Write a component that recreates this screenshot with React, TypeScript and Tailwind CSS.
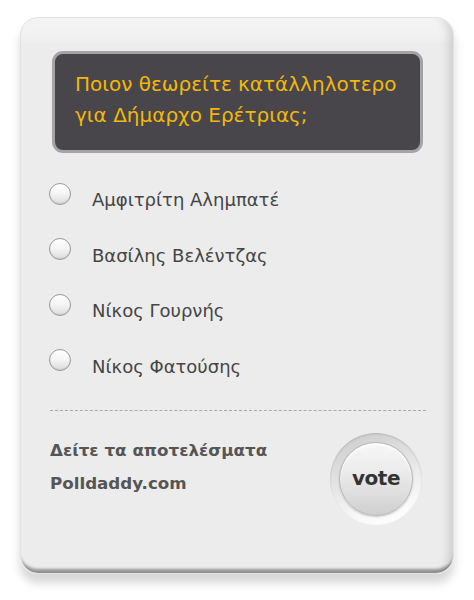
import React from "react";

const options = [
  "Αμφιτρίτη Αλημπατέ",
  "Βασίλης Βελέντζας",
  "Νίκος Γουρνής",
  "Νίκος Φατούσης",
];

export default function App() {
  return (
    <div className="w-[474px] h-[600px] bg-white pt-[17px] pl-[20px]" style={{ fontFamily: '"DejaVu Sans", Verdana, sans-serif' }}>
      <div className="w-[434px] h-[557px] rounded-[18px] border border-[#e2e2e2] bg-[linear-gradient(#f4f4f4_0px,#f1f1f1_18px,#ececec_26px,#ececec_100%)] shadow-[0_9px_10px_rgba(0,0,0,0.16),inset_0_-7px_3px_-3px_rgba(0,0,0,0.38),inset_-14px_0_10px_-10px_rgba(0,0,0,0.14)] pt-[33px] pl-[31px] pr-[30px]">
        <div className="w-[371px] h-[102px] rounded-[11px] border-[3px] border-[#a4a4a6] bg-[#48454b] flex flex-col justify-center pl-[20px]">
          <div className="text-[#f0b90a] text-[20px] leading-[31px] -mt-[4px]">
            <div>Ποιον θεωρείτε κατάλληλοτερο</div>
            <div>για Δήμαρχο Ερέτριας;</div>
          </div>
        </div>
        <div className="mt-[17px] flex flex-col">
          {options.map((o) => (
            <div key={o} className="h-[55.5px] flex items-center">
              <div className="w-[22px] h-[22px] rounded-full border border-[#9a9a9a] bg-[linear-gradient(#ffffff_0%,#f6f6f6_45%,#dcdcdc_100%)] shadow-[inset_0_-1px_1px_rgba(0,0,0,0.08)] -ml-[3px] -mt-[8px]" />
              <span className="ml-[21px] text-[18px] text-[#454545] mt-[4px]">{o}</span>
            </div>
          ))}
        </div>
        <div className="mt-[18px] -ml-[2px] w-[376px] border-t-[1.5px] border-dashed border-[#a9a9a9]" />
        <div className="flex items-start justify-between mt-[22px] -ml-[2px]">
          <div className="font-bold text-[#555555] text-[16.7px] leading-[33px] pt-[1px]">
            <div>Δείτε τα αποτελέσματα</div>
            <div>Polldaddy.com</div>
          </div>
          <div className="w-[92px] h-[92px] rounded-full bg-[linear-gradient(160deg,#c9c9c9_0%,#e2e2e2_40%,#fafafa_80%,#ffffff_100%)] flex items-center justify-center mr-[1px] mt-[0px] shadow-[inset_0_1px_2px_rgba(0,0,0,0.15)]">
            <div className="w-[74px] h-[74px] rounded-full border border-[#b8b8b8] bg-[linear-gradient(#f7f7f7_0%,#e9e9e9_45%,#cfcfcf_100%)] shadow-[0_1px_2px_rgba(0,0,0,0.2),inset_0_2px_2px_rgba(255,255,255,0.9)] flex items-center justify-center">
              <span className="text-[20px] font-bold text-[#333333] tracking-[-0.5px] -mt-[2px]">vote</span>
            </div>
          </div>
        </div>
      </div>
    </div>
  );
}
